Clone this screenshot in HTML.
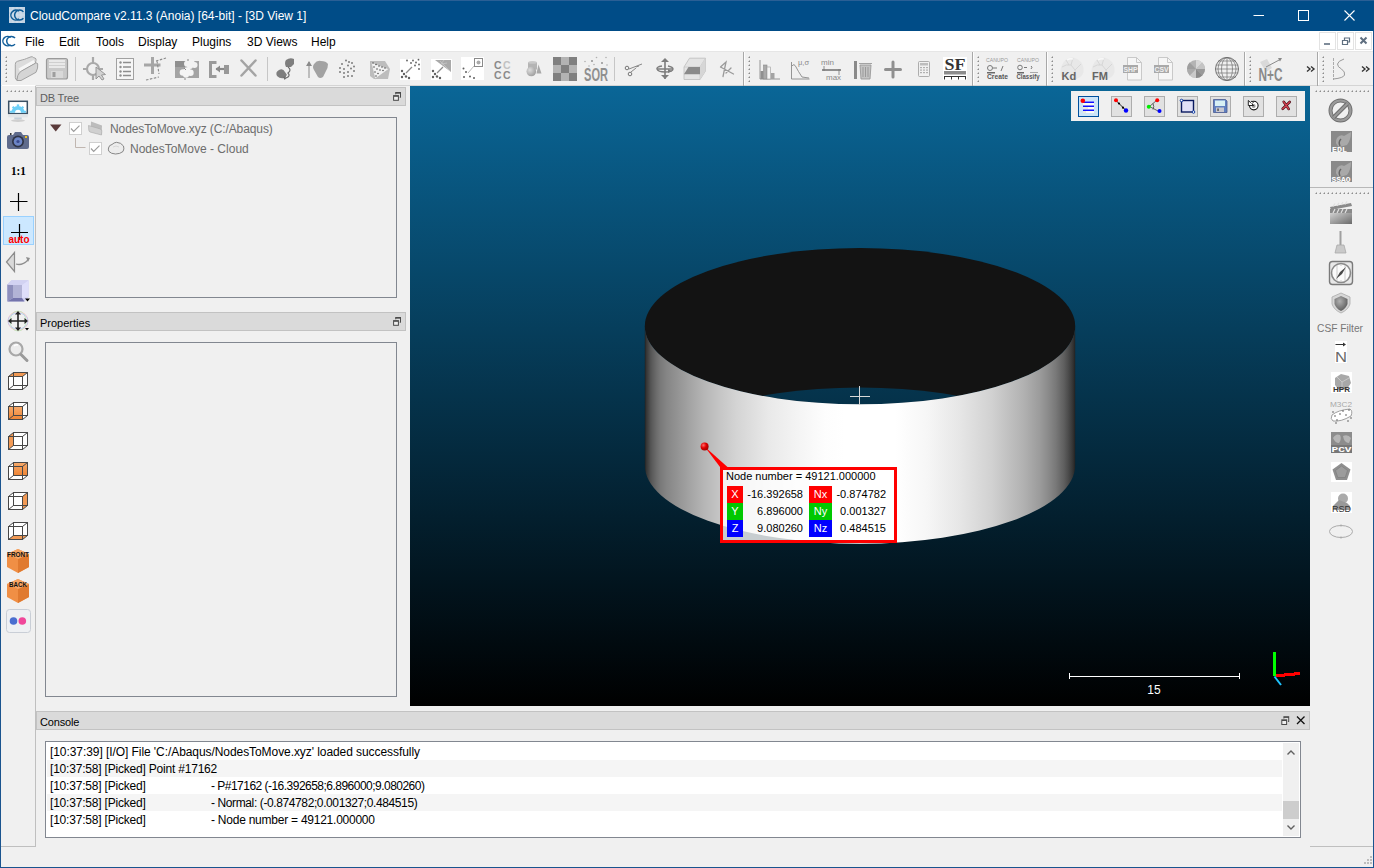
<!DOCTYPE html>
<html><head><meta charset="utf-8">
<style>
*{box-sizing:border-box;margin:0;padding:0}
html,body{width:1374px;height:868px;overflow:hidden;background:#f0f0f0;font-family:"Liberation Sans",sans-serif;font-size:12px;color:#000}
.a{position:absolute}
.t{position:absolute;white-space:nowrap;line-height:14px}
svg{position:absolute;overflow:visible}
</style></head><body>
<!-- window frame -->
<div class="a" style="left:0;top:0;width:1374px;height:868px;border:1px solid #1a548f;border-top:none"></div>
<!-- title bar -->
<div class="a" style="left:0;top:0;width:1374px;height:31px;background:#004c87"></div>
<div class="a" style="left:0;top:0;width:1374px;height:1px;background:#2a5f95"></div>
<div id="titlebar-icons"></div>
<div class="t" style="left:30px;top:9px;color:#fff;font-size:12px">CloudCompare v2.11.3 (Anoia) [64-bit] - [3D View 1]</div>

<!-- menu bar -->
<div class="a" style="left:1px;top:31px;width:1372px;height:21px;background:#fff"></div>
<div class="a" style="left:1px;top:51px;width:1372px;height:1px;background:#e6e6e6"></div>
<div id="menu">
<div class="t" style="left:25px;top:35px">File</div>
<div class="t" style="left:59px;top:35px">Edit</div>
<div class="t" style="left:96px;top:35px">Tools</div>
<div class="t" style="left:138px;top:35px">Display</div>
<div class="t" style="left:192px;top:35px">Plugins</div>
<div class="t" style="left:247px;top:35px">3D Views</div>
<div class="t" style="left:311px;top:35px">Help</div>
</div>

<!-- main toolbar -->
<div class="a" style="left:1px;top:52px;width:1372px;height:34px;background:#f0f0f0"></div>
<div class="a" style="left:1px;top:85px;width:1372px;height:1px;background:#d4d4d4"></div>

<!-- left toolbar -->
<div class="a" style="left:1px;top:86px;width:34px;height:761px;background:#f0f0f0"></div>
<div class="a" style="left:35px;top:86px;width:1px;height:761px;background:#bfbfbf"></div>
<div class="a" style="left:1px;top:846px;width:35px;height:1px;background:#bfbfbf"></div>

<!-- DB tree dock -->
<div class="a" style="left:36px;top:87px;width:370px;height:19px;background:#dadada;border:1px solid #c2c2c2"></div>
<div class="t" style="left:40px;top:91px;color:#5e5e5e;font-size:11px;letter-spacing:-0.2px">DB Tree</div>
<div class="a" style="left:45px;top:117px;width:352px;height:181px;border:1px solid #828790;background:#f0f0f0"></div>

<!-- properties dock -->
<div class="a" style="left:36px;top:312px;width:370px;height:19px;background:#dadada;border:1px solid #c2c2c2"></div>
<div class="t" style="left:40px;top:316px;font-size:11px;letter-spacing:0px">Properties</div>
<div class="a" style="left:45px;top:342px;width:352px;height:355px;border:1px solid #828790;background:#f0f0f0"></div>

<!-- 3D view -->
<div class="a" style="left:410px;top:86px;width:900px;height:620px;background:linear-gradient(#0a6697,#000)"></div>
<svg style="left:410px;top:86px" width="900" height="620" viewBox="410 86 900 620">
<defs>
<linearGradient id="bg" gradientUnits="userSpaceOnUse" x1="0" y1="86" x2="0" y2="706"><stop offset="0" stop-color="#0a6697"/><stop offset="1" stop-color="#000"/></linearGradient>
<linearGradient id="wall" gradientUnits="userSpaceOnUse" x1="644.6" y1="0" x2="1075.4" y2="0">
<stop offset="0.0000" stop-color="#1e1e1e"/>
<stop offset="0.0021" stop-color="#2a2a2a"/>
<stop offset="0.0044" stop-color="#363636"/>
<stop offset="0.0091" stop-color="#444444"/>
<stop offset="0.0137" stop-color="#525252"/>
<stop offset="0.0183" stop-color="#5c5c5c"/>
<stop offset="0.0276" stop-color="#6c6c6c"/>
<stop offset="0.0369" stop-color="#797979"/>
<stop offset="0.0508" stop-color="#858585"/>
<stop offset="0.0648" stop-color="#8d8d8d"/>
<stop offset="0.1019" stop-color="#a2a2a2"/>
<stop offset="0.1390" stop-color="#b6b6b6"/>
<stop offset="0.1762" stop-color="#c6c6c6"/>
<stop offset="0.2133" stop-color="#d4d4d4"/>
<stop offset="0.2876" stop-color="#e9e9e9"/>
<stop offset="0.3619" stop-color="#f5f5f5"/>
<stop offset="0.4188" stop-color="#fdfdfd"/>
<stop offset="0.4652" stop-color="#ffffff"/>
<stop offset="0.5812" stop-color="#ffffff"/>
<stop offset="0.6578" stop-color="#f6f6f6"/>
<stop offset="0.7321" stop-color="#e6e6e6"/>
<stop offset="0.8064" stop-color="#d1d1d1"/>
<stop offset="0.8435" stop-color="#c1c1c1"/>
<stop offset="0.8807" stop-color="#b1b1b1"/>
<stop offset="0.9178" stop-color="#9b9b9b"/>
<stop offset="0.9364" stop-color="#8b8b8b"/>
<stop offset="0.9550" stop-color="#787878"/>
<stop offset="0.9643" stop-color="#6b6b6b"/>
<stop offset="0.9735" stop-color="#5f5f5f"/>
<stop offset="0.9828" stop-color="#4d4d4d"/>
<stop offset="0.9921" stop-color="#393939"/>
<stop offset="0.9968" stop-color="#2c2c2c"/>
<stop offset="1.0000" stop-color="#1e1e1e"/>
</linearGradient>
<radialGradient id="dot" cx="0.35" cy="0.35" r="0.7"><stop offset="0" stop-color="#ff6a6a"/><stop offset="0.5" stop-color="#e00000"/><stop offset="1" stop-color="#a00000"/></radialGradient>
<clipPath id="topc"><ellipse cx="860" cy="326.2" rx="215.2" ry="78.2"/></clipPath>
</defs>
<ellipse cx="860" cy="326.2" rx="215.2" ry="78.2" fill="#131313"/>
<ellipse cx="860" cy="465.6" rx="215.2" ry="78.2" fill="url(#bg)" clip-path="url(#topc)"/>
<path d="M644.8 326.2 L644.8 465.6 A215.2 78.2 0 0 0 1075.2 465.6 L1075.2 326.2 A215.2 78.2 0 0 1 644.8 326.2 Z" fill="url(#wall)"/>
<path d="M859.5 386v19M850 396.5h20" stroke="#d8d8d8" stroke-width="1"/>
<!-- leader -->
<path d="M704.5 446.5 L720 467 L727.5 467 Z" fill="#ff0000"/>
<circle cx="704.6" cy="446.4" r="4" fill="url(#dot)"/>
<!-- scale bar -->
<path d="M1069 676.5H1240M1069.5 673v6M1239.5 673v6" stroke="#fff" stroke-width="1"/>
<!-- axes -->
<rect x="1273" y="652" width="3" height="24" fill="#00ff00"/>
<g fill="#ff0000"><rect x="1276" y="674" width="9" height="3"/><rect x="1284" y="673" width="11" height="3"/><rect x="1294" y="672" width="6" height="3"/></g>
<path d="M1274.5 676.5L1281 685" stroke="#1ec4ff" stroke-width="2"/>
</svg>
<div class="a" style="left:720px;top:467px;width:177px;height:76px;border:3px solid #ff0000;background:rgba(255,255,255,0.78)"></div>
<div class="t" style="left:726px;top:470px;font-size:11px;line-height:13px">Node number = 49121.000000</div>
<div class="a" style="left:727px;top:486px;width:16px;height:17px;background:#ff0000"></div>
<div class="a" style="left:727px;top:503px;width:16px;height:17px;background:#00c800"></div>
<div class="a" style="left:727px;top:520px;width:16px;height:17px;background:#0000ff"></div>
<div class="a" style="left:809px;top:486px;width:23px;height:17px;background:#ff0000"></div>
<div class="a" style="left:809px;top:503px;width:23px;height:17px;background:#00c800"></div>
<div class="a" style="left:809px;top:520px;width:23px;height:17px;background:#0000ff"></div>
<div class="t" style="left:727px;top:488px;width:16px;text-align:center;color:#fff;font-size:11px;line-height:13px">X</div>
<div class="t" style="left:727px;top:505px;width:16px;text-align:center;color:#fff;font-size:11px;line-height:13px">Y</div>
<div class="t" style="left:727px;top:522px;width:16px;text-align:center;color:#fff;font-size:11px;line-height:13px">Z</div>
<div class="t" style="left:809px;top:488px;width:23px;text-align:center;color:#fff;font-size:11px;line-height:13px">Nx</div>
<div class="t" style="left:809px;top:505px;width:23px;text-align:center;color:#fff;font-size:11px;line-height:13px">Ny</div>
<div class="t" style="left:809px;top:522px;width:23px;text-align:center;color:#fff;font-size:11px;line-height:13px">Nz</div>
<div class="t" style="left:743px;top:488px;width:60px;text-align:right;font-size:11px;line-height:13px">-16.392658</div>
<div class="t" style="left:743px;top:505px;width:60px;text-align:right;font-size:11px;line-height:13px">6.896000</div>
<div class="t" style="left:743px;top:522px;width:60px;text-align:right;font-size:11px;line-height:13px">9.080260</div>
<div class="t" style="left:832px;top:488px;width:54px;text-align:right;font-size:11px;line-height:13px">-0.874782</div>
<div class="t" style="left:832px;top:505px;width:54px;text-align:right;font-size:11px;line-height:13px">0.001327</div>
<div class="t" style="left:832px;top:522px;width:54px;text-align:right;font-size:11px;line-height:13px">0.484515</div>
<div class="t" style="left:1134px;top:683px;width:40px;text-align:center;color:#fff;font-size:12px">15</div>

<!-- 3D overlay toolbar -->
<div class="a" style="left:1071px;top:91px;width:234px;height:30px;background:#f0f0f0"></div>
<div class="a" style="left:1078px;top:96px;width:21px;height:21px;background:#cce4f7;border:1px solid #00509e"></div>
<div class="a" style="left:1111px;top:96px;width:21px;height:21px;background:#e1e1e1;border:1px solid #adadad"></div>
<div class="a" style="left:1144px;top:96px;width:21px;height:21px;background:#e1e1e1;border:1px solid #adadad"></div>
<div class="a" style="left:1177px;top:96px;width:21px;height:21px;background:#e1e1e1;border:1px solid #adadad"></div>
<div class="a" style="left:1210px;top:96px;width:21px;height:21px;background:#e1e1e1;border:1px solid #adadad"></div>
<div class="a" style="left:1243px;top:96px;width:21px;height:21px;background:#e1e1e1;border:1px solid #adadad"></div>
<div class="a" style="left:1276px;top:96px;width:21px;height:21px;background:#e1e1e1;border:1px solid #adadad"></div>
<svg style="left:0;top:0" width="1374" height="868" viewBox="0 0 1374 868">
<rect x="1083" y="101.5" width="11" height="11.5" fill="#fbfbf6"/>
<path d="M1083 102.3h11M1083 106.3h11M1083 110.2h11" stroke="#1010ff" stroke-width="1.5"/>
<path d="M1083 108h5M1083 112h3" stroke="#d8d8c8" stroke-width="1"/>
<circle cx="1082.8" cy="100.8" r="2.3" fill="#ff0000"/>
<path d="M1116 100.5L1126 110.5" stroke="#222" stroke-width="1"/>
<circle cx="1119" cy="103.5" r="1.1" fill="#000"/><circle cx="1123" cy="107.7" r="1.1" fill="#000"/>
<circle cx="1116" cy="100.3" r="2" fill="#ff0000"/><circle cx="1126" cy="110.5" r="2.2" fill="#0000ff"/>
<path d="M1149.5 106.5L1157 100M1149.5 106.5L1158 111M1153 103.5q1.5 3 0 6" stroke="#555" stroke-width="0.9" fill="none"/>
<circle cx="1157.2" cy="100.3" r="2" fill="#ff0000"/><circle cx="1159.5" cy="111" r="2" fill="#0000ff"/><circle cx="1148.8" cy="106.8" r="2" fill="#00ee00"/>
<rect x="1181.5" y="100.5" width="12" height="11.5" fill="#e0e0f8" stroke="#0a1a60" stroke-width="1.4"/>
<circle cx="1181.5" cy="100.5" r="1.3" fill="#fff" stroke="#0030a0" stroke-width="0.9"/><circle cx="1193.5" cy="112" r="1.3" fill="#fff" stroke="#0030a0" stroke-width="0.9"/>
<path d="M1213.5 99.5h12l1.5 1.5v11.5h-13.5z" fill="#6080c0" stroke="#4a5a90" stroke-width="0.8"/>
<rect x="1215" y="100.5" width="10" height="5.5" fill="#d8f0f4"/>
<rect x="1216" y="107.5" width="8" height="4.5" fill="#c8c8d0"/><rect x="1217.3" y="108.5" width="1.5" height="2.5" fill="#555"/>
<circle cx="1253.8" cy="105.6" r="4.3" fill="#fff" stroke="#111" stroke-width="1.1"/><circle cx="1253.6" cy="106" r="2" fill="#9a9a9a"/><path d="M1248.3 100.5v5h5.3l-1.8-1.7 1.5-1.5-1.4-1.2-1.5 1.4z" fill="#fff" stroke="#111" stroke-width="0.9"/>
<path d="M1283.7 101.8l5 7.2M1289.7 102l-7 6.8" stroke="#4a1018" stroke-width="2.6" stroke-linecap="round"/><path d="M1283.7 101.8l5 7.2M1289.7 102l-7 6.8" stroke="#d04050" stroke-width="1.4" stroke-linecap="round"/>
</svg>

<!-- right toolbar -->
<div class="a" style="left:1310px;top:86px;width:63px;height:761px;background:#f0f0f0"></div>
<div class="a" style="left:1310px;top:846px;width:63px;height:1px;background:#bfbfbf"></div>

<!-- console dock -->
<div class="a" style="left:36px;top:711px;width:1274px;height:19px;background:#dadada;border:1px solid #c2c2c2"></div>
<div class="t" style="left:40px;top:715px;font-size:11px;letter-spacing:-0.15px">Console</div>
<div class="a" style="left:45px;top:741px;width:1256px;height:97px;border:1px solid #828790;background:#fff"></div>

<!-- toolbar handles -->
<svg style="left:0;top:0" width="1374" height="868" viewBox="0 0 1374 868">
<g fill="#8c8c8c"><path d="M5 58h2v-2z"/><path d="M748 58h2v-2z"/><path d="M977 58h2v-2z"/><path d="M1051 58h2v-2z"/><path d="M1249 58h2v-2z"/><path d="M1322 58h2v-2z"/><path d="M5 62h2v-2z"/><path d="M748 62h2v-2z"/><path d="M977 62h2v-2z"/><path d="M1051 62h2v-2z"/><path d="M1249 62h2v-2z"/><path d="M1322 62h2v-2z"/><path d="M5 66h2v-2z"/><path d="M748 66h2v-2z"/><path d="M977 66h2v-2z"/><path d="M1051 66h2v-2z"/><path d="M1249 66h2v-2z"/><path d="M1322 66h2v-2z"/><path d="M5 70h2v-2z"/><path d="M748 70h2v-2z"/><path d="M977 70h2v-2z"/><path d="M1051 70h2v-2z"/><path d="M1249 70h2v-2z"/><path d="M1322 70h2v-2z"/><path d="M5 74h2v-2z"/><path d="M748 74h2v-2z"/><path d="M977 74h2v-2z"/><path d="M1051 74h2v-2z"/><path d="M1249 74h2v-2z"/><path d="M1322 74h2v-2z"/><path d="M5 78h2v-2z"/><path d="M748 78h2v-2z"/><path d="M977 78h2v-2z"/><path d="M1051 78h2v-2z"/><path d="M1249 78h2v-2z"/><path d="M1322 78h2v-2z"/><path d="M5 82h2v-2z"/><path d="M748 82h2v-2z"/><path d="M977 82h2v-2z"/><path d="M1051 82h2v-2z"/><path d="M1249 82h2v-2z"/><path d="M1322 82h2v-2z"/><path d="M6 92h2v-2z"/><path d="M10 92h2v-2z"/><path d="M14 92h2v-2z"/><path d="M18 92h2v-2z"/><path d="M22 92h2v-2z"/><path d="M26 92h2v-2z"/><path d="M30 92h2v-2z"/><path d="M1315 92h2v-2z"/><path d="M1315 194h2v-2z"/><path d="M1319 92h2v-2z"/><path d="M1319 194h2v-2z"/><path d="M1323 92h2v-2z"/><path d="M1323 194h2v-2z"/><path d="M1327 92h2v-2z"/><path d="M1327 194h2v-2z"/><path d="M1331 92h2v-2z"/><path d="M1331 194h2v-2z"/><path d="M1335 92h2v-2z"/><path d="M1335 194h2v-2z"/><path d="M1339 92h2v-2z"/><path d="M1339 194h2v-2z"/><path d="M1343 92h2v-2z"/><path d="M1343 194h2v-2z"/><path d="M1347 92h2v-2z"/><path d="M1347 194h2v-2z"/><path d="M1351 92h2v-2z"/><path d="M1351 194h2v-2z"/><path d="M1355 92h2v-2z"/><path d="M1355 194h2v-2z"/><path d="M1359 92h2v-2z"/><path d="M1359 194h2v-2z"/><path d="M1363 92h2v-2z"/><path d="M1363 194h2v-2z"/><path d="M1367 92h2v-2z"/><path d="M1367 194h2v-2z"/></g>
<g stroke="#c6c6c6" stroke-width="1"><path d="M75.5 57v24M267.5 57v24M614.5 57v24"/></g>
<g stroke="#a8a8a8" stroke-width="1"><path d="M743.5 52v34M972.5 52v34M1046.5 52v34M1244.5 52v34M1317.5 52v34"/></g><g stroke="#fdfdfd" stroke-width="1"><path d="M744.5 52v33M973.5 52v33M1047.5 52v33M1245.5 52v33M1318.5 52v33"/></g>
<path d="M1310 187.5h63" stroke="#b8b8b8"/>
<path d="M1.5 85.5h34" stroke="#fff"/>
</svg>
<!-- main toolbar icons -->
<svg style="left:0;top:0" width="1374" height="868" viewBox="0 0 1374 868">
<!-- folder -->
<path d="M15.3 64.5Q15 62 17.5 61.3L22.5 59.8Q24.5 59.5 26.5 58.5L31 56.8Q33 56.3 33.6 57.8L35 58Q36.5 58.5 36 60.5L35.3 63L21.5 71L17.3 79.5Q15.3 80 15.3 77.5Z" fill="#dcdcdc" stroke="#9c9c9c" stroke-width="0.9"/>
<path d="M18.5 68.5L33.5 60L35 63L20 71.5z" fill="#f6f6f6"/>
<path d="M16.8 80.5L21 80.5L36 72.3Q38.3 68 37.7 64Q37.2 62.3 35.5 63.2L21.5 71Q19 72.5 17.8 75.5z" fill="#d5d5d5" stroke="#9a9a9a" stroke-width="0.9"/>
<!-- save -->
<rect x="46.5" y="58.5" width="21" height="20.5" rx="2" fill="#c9c9c9" stroke="#9a9a9a" stroke-width="1.2"/>
<rect x="49" y="60" width="16" height="8" fill="#e9e9e9"/>
<path d="M49 62.5h16M49 65.5h16" stroke="#cfcfcf" stroke-width="1"/>
<rect x="51" y="71" width="12" height="7" fill="#d9d9d9"/>
<rect x="52.5" y="72" width="3" height="5" fill="#9e9e9e"/>
<!-- pick -->
<circle cx="93" cy="69" r="6" fill="none" stroke="#a9a9a9" stroke-width="2.2"/>
<path d="M93 57v6M93 75v5M83 69h5M98 69h5" stroke="#a9a9a9" stroke-width="2.2"/>
<path d="M96 67l0 12 3-3 3 4 2-1-2.5-4 4-0.5z" fill="#d2d2d2" stroke="#8e8e8e" stroke-width="0.9"/>
<!-- list -->
<rect x="116.5" y="58.5" width="17" height="21" fill="#f6f6f6" stroke="#a1a1a1" stroke-width="1"/>
<g fill="#8e8e8e"><circle cx="120.5" cy="62.5" r="1.2"/><circle cx="120.5" cy="67" r="1.2"/><circle cx="120.5" cy="71.5" r="1.2"/><circle cx="120.5" cy="75.5" r="1.2"/></g>
<path d="M123 62.5h8M123 67h8M123 71.5h8M123 75.5h8" stroke="#8e8e8e" stroke-width="1.3"/>
<!-- plus dashed -->
<path d="M152.5 57v17M144 65h16.5" stroke="#a6a6a6" stroke-width="3"/>
<path d="M156 61l10-3M157 61l2 13M146 80l13-3" stroke="#8a8a8a" stroke-width="1.1" stroke-dasharray="2.5 1.5"/>
<!-- cloud segment -->
<rect x="175" y="61" width="24" height="17" fill="#a4a4a4"/><rect x="175" y="61" width="10" height="6" fill="#8f8f8f"/>
<g fill="#f2f2f2"><circle cx="187" cy="63.8" r="3"/><circle cx="191" cy="62.5" r="3.5"/><circle cx="194.5" cy="65" r="3"/><circle cx="190" cy="66" r="3"/></g>
<g fill="#f5f5f5"><circle cx="183" cy="72.5" r="3.3"/><circle cx="187" cy="70.8" r="3.5"/><circle cx="190.5" cy="72.8" r="3.2"/><circle cx="186" cy="74.8" r="3"/></g>
<path d="M184 68l2 2M185 78v2M188 59v2" stroke="#888" stroke-width="1"/>
<!-- [<- -->
<path d="M209 61h7.5v3h-4.5v11h4.5v3h-7.5z" fill="#9a9a9a"/>
<path d="M216 69h8" stroke="#8a8a8a" stroke-width="2.2"/><path d="M215.5 69l4.5-3.5v7z" fill="#8a8a8a"/>
<rect x="224" y="65" width="5" height="9" fill="#989898"/>
<!-- X -->
<path d="M241.5 60.5l14 15M255.5 60.5l-14 15" stroke="#a4a4a4" stroke-width="2.5" stroke-linecap="round"/>
<!-- registration -->
<path d="M277 76q-2-4 2-6t6 2l2 3-3 3q-4 1-7-2z" fill="#7e7e7e"/>
<path d="M286 60q4-3 8-1v5l-3 3-5 0q-2-4 0-7z" fill="#7e7e7e"/>
<path d="M288 67q4 3 0 6q3 3-2 5l-2 1" fill="none" stroke="#6e6e6e" stroke-width="1.2"/><path d="M283 77l2 3 1-4z" fill="#6e6e6e"/>
<!-- normals -->
<path d="M309 78V62" stroke="#8a8a8a" stroke-width="1"/><path d="M306 66l3-5 3 5z" fill="#8a8a8a"/>
<path d="M314 64q3-4 7-3q5 0 7 3q0 4-2 7l-3 6q-3 2-5 0l-4-7q-2-3 0-6z" fill="#a2a2a2"/>
<!-- dots -->
<g fill="#7d7d7d"><circle cx="346" cy="60.6" r="1"/><circle cx="349" cy="62" r="1"/><circle cx="352" cy="63" r="1"/><circle cx="342" cy="64" r="1"/><circle cx="348" cy="65.5" r="1"/><circle cx="354" cy="66.5" r="1"/><circle cx="340" cy="68" r="1"/><circle cx="344" cy="69" r="1"/><circle cx="351" cy="68.5" r="1"/><circle cx="354" cy="71" r="1"/><circle cx="340" cy="72" r="1"/><circle cx="344" cy="73" r="1"/><circle cx="348" cy="72" r="1"/><circle cx="344" cy="77" r="1"/><circle cx="348" cy="76" r="1"/><circle cx="352" cy="76" r="1"/></g>
<!-- mesh tri -->
<path d="M370 61h15l5 8-2 10h-14l-4-3z" fill="#bdbdbd"/>
<path d="M371 62l18 7-14 10z" fill="#f2f2f2" stroke="#b2b2b2" stroke-width="0.6"/>
<g fill="#555"><circle cx="373" cy="63" r="0.8"/><circle cx="376" cy="64.5" r="0.8"/><circle cx="379" cy="66" r="0.8"/><circle cx="382" cy="67" r="0.8"/><circle cx="385" cy="68" r="0.8"/><circle cx="374" cy="67" r="0.8"/><circle cx="377" cy="69" r="0.8"/><circle cx="380" cy="70" r="0.8"/><circle cx="383" cy="70.5" r="0.8"/><circle cx="375" cy="72" r="0.8"/><circle cx="378" cy="73.5" r="0.8"/><circle cx="376" cy="76" r="0.8"/></g>
<!-- C2C -->
<rect x="400" y="59" width="21" height="21" fill="#fff"/>
<g fill="#606060"><circle cx="407" cy="60.5" r="0.9"/><circle cx="413" cy="60.5" r="0.9"/><circle cx="418.5" cy="59.7" r="0.9"/><circle cx="411" cy="63" r="0.9"/><circle cx="416" cy="62.5" r="0.9"/><circle cx="419" cy="64.5" r="0.9"/><circle cx="415" cy="65.5" r="0.9"/><circle cx="419" cy="69" r="0.9"/><circle cx="402" cy="71" r="1.2"/><circle cx="404" cy="74" r="1.2"/><circle cx="402" cy="77" r="1.2"/><circle cx="406" cy="76.5" r="1.2"/><circle cx="409" cy="78" r="1.2"/></g>
<path d="M406 73l6-6" stroke="#8a8a8a" stroke-width="1.2"/>
<!-- C2M -->
<rect x="431" y="59" width="21" height="21" fill="#fff"/>
<path d="M435 60h16v12z" fill="#a9a9a9"/><path d="M440 61l10 10M444 60l-3 4M447 63l-5 1" stroke="#d0d0d0" stroke-width="0.6"/>
<g fill="#606060"><circle cx="433" cy="71" r="1.2"/><circle cx="435" cy="74" r="1.2"/><circle cx="433" cy="77" r="1.2"/><circle cx="437" cy="76.5" r="1.2"/><circle cx="440" cy="78" r="1.2"/></g>
<path d="M437 73l6-6" stroke="#8a8a8a" stroke-width="1.2"/>
<!-- cloud primitive -->
<rect x="461" y="57" width="23" height="23" fill="#fff"/>
<rect x="474.5" y="58.5" width="8" height="8" fill="#fff" stroke="#8a8a8a" stroke-width="1"/><circle cx="478.5" cy="62.5" r="2" fill="#aaa"/>
<path d="M468 73l6-7" stroke="#aaa" stroke-width="0.8"/>
<g fill="#606060"><circle cx="463.5" cy="68.5" r="1"/><circle cx="466" cy="72" r="1"/><circle cx="464" cy="77" r="1"/><circle cx="470" cy="76.5" r="1"/><circle cx="474" cy="78" r="1"/></g>
<!-- CCCC -->
<g font-family="Liberation Sans" font-weight="bold" font-size="10.5">
<text x="494" y="69" fill="#8a8a8a">C</text><text x="503" y="69" fill="#c2c2c2">C</text>
<text x="494" y="78.5" fill="#8a8a8a">C</text><text x="503" y="78.5" fill="#8a8a8a">C</text></g>
<!-- solids -->
<defs><radialGradient id="sg" cx="0.35" cy="0.35" r="0.75"><stop offset="0" stop-color="#dcdcdc"/><stop offset="1" stop-color="#999"/></radialGradient></defs><path d="M528 62.5q4.5-2 9 0v7h-9z" fill="#b4b4b4"/><ellipse cx="532.5" cy="62.5" rx="4.5" ry="1.3" fill="#c8c8c8"/><path d="M536.5 73.5l2-9 3 9z" fill="#a8a8a8"/><circle cx="531.3" cy="71.5" r="4.8" fill="url(#sg)"/>
<!-- checker -->
<g><rect x="553" y="57" width="24" height="24" fill="#b3b3b3"/>
<path d="M553 57h8v8h-8zM569 57h8v8h-8zM561 65h8v8h-8zM553 73h8v8h-8zM569 73h8v8h-8z" fill="#7f7f7f"/></g>
<!-- SOR -->
<text x="584" y="80.5" font-family="Liberation Sans" font-weight="bold" font-size="18.5" fill="#8f8f8f" textLength="24" lengthAdjust="spacingAndGlyphs">SOR</text>
<g fill="#b0b0b0"><circle cx="585" cy="61.5" r="0.8"/><circle cx="596.5" cy="57.5" r="0.8"/><circle cx="606" cy="57.5" r="0.8"/><circle cx="594" cy="64.5" r="0.8"/><circle cx="607" cy="65" r="0.8"/><circle cx="589" cy="66" r="0.8"/></g>
<path d="M591 60l2 2M593 60l-2 2M601 62l2 2M603 62l-2 2" stroke="#999" stroke-width="0.8"/>
<!-- scissors -->
<circle cx="627" cy="68" r="1.8" fill="none" stroke="#777" stroke-width="1"/><circle cx="630" cy="74" r="1.8" fill="none" stroke="#777" stroke-width="1"/>
<path d="M629 69l13-5M631 72l5-4M636 67l3-1" stroke="#888" stroke-width="1"/>
<!-- rotate translate -->
<path d="M665 59v20M657 69h16" stroke="#7d7d7d" stroke-width="1.6"/>
<path d="M661 62l4-4 4 4zM661 75l4 4 4-4z" fill="#7d7d7d"/>
<path d="M662 66q-6 1-5 3q1 3 8 3q8 0 8-3q0-2-5-3" fill="none" stroke="#7d7d7d" stroke-width="1.4"/>
<path d="M668 69l4 2-4 2z" fill="#7d7d7d"/>
<!-- section box -->
<path d="M684 67L689.5 58.2H705.5V71L700 79.5H684Z" fill="#e4e4e4" stroke="#bdbdbd" stroke-width="0.8"/>
<path d="M684 67H700L705.5 58.2M700 67V79.5" fill="none" stroke="#c6c6c6" stroke-width="0.8"/>
<path d="M700 67L705.5 58.2V71L700 79.5z" fill="#d6d6d6"/>
<path d="M684 74.3L688.5 67.1H700V74.3Z" fill="#8a8a8a"/>
<!-- polyline -->
<path d="M720.5 67L726 62L723 76.5M720.5 67L733.5 74M731 68L726 73" fill="none" stroke="#9a9a9a" stroke-width="1.3" stroke-linecap="round"/>
<!-- histogram -->
<path d="M760 60v19h20" fill="none" stroke="#8a8a8a" stroke-width="0.9"/>
<rect x="760.5" y="71" width="3" height="8" fill="#8f8f8f"/><rect x="763.5" y="65" width="3.5" height="14" fill="#a9a9a9" stroke="#8a8a8a" stroke-width="0.6"/><rect x="767" y="67" width="3.5" height="12" fill="#f4f4f4" stroke="#9a9a9a" stroke-width="0.6"/><rect x="771" y="73" width="3.5" height="6" fill="#a3a3a3"/>
<!-- mu sigma -->
<path d="M791.5 62v17h18" fill="none" stroke="#8a8a8a" stroke-width="0.9"/>
<path d="M792 66q2-3 4 1t6 10l7 1" fill="none" stroke="#8a8a8a" stroke-width="0.9"/>
<text x="798" y="65" font-family="Liberation Sans" font-size="7.5" fill="#8a8a8a">μ,σ</text>
<!-- min max -->
<text x="821" y="65" font-family="Liberation Sans" font-size="8" fill="#8a8a8a">min</text>
<text x="826" y="80" font-family="Liberation Sans" font-size="8" fill="#8a8a8a">max</text>
<path d="M822 70h19" stroke="#8f8f8f" stroke-width="2"/><path d="M824 66v5M839 69v6" stroke="#777" stroke-width="0.8"/>
<!-- trash -->
<rect x="854" y="61" width="3" height="18" fill="#8a8a8a"/>
<path d="M859 63.5h13M860 65h11l-1 14h-9z" fill="#c3c3c3" stroke="#999" stroke-width="0.9"/>
<path d="M863 67v10M865.5 67v10M868 67v10" stroke="#999" stroke-width="1"/>
<!-- plus -->
<path d="M893 62v15M885.5 69.5h15" stroke="#8f8f8f" stroke-width="3" stroke-linecap="round"/>
<!-- calculator -->
<rect x="918.5" y="61.5" width="11" height="15" rx="1" fill="#f0f0f0" stroke="#a5a5a5" stroke-width="0.9"/>
<rect x="920" y="63" width="8" height="2.5" fill="#bdbdbd"/>
<g fill="#b0b0b0"><rect x="920" y="67" width="2" height="1.2"/><rect x="923" y="67" width="2" height="1.2"/><rect x="926" y="67" width="2" height="1.2"/><rect x="920" y="69.5" width="2" height="1.2"/><rect x="923" y="69.5" width="2" height="1.2"/><rect x="926" y="69.5" width="2" height="1.2"/><rect x="920" y="72" width="2" height="1.2"/><rect x="923" y="72" width="2" height="1.2"/><rect x="926" y="72" width="2" height="1.2"/></g>
<!-- SF -->
<rect x="943" y="57" width="24" height="23" fill="#fff"/>
<text x="944.5" y="69.5" font-family="Liberation Serif" font-weight="bold" font-size="16.5" fill="#333" textLength="21" lengthAdjust="spacingAndGlyphs">SF</text>
<rect x="944" y="71" width="22" height="3.5" fill="#8c8c8c"/>
<path d="M944 76.5h22M944.5 76.5v3M951.5 76.5v3M958.5 76.5v3M965.5 76.5v3" stroke="#333" stroke-width="1"/>
<!-- CANUPO -->
<g font-family="Liberation Sans" fill="#9a9a9a">
<text x="986" y="62" font-size="5.5" textLength="22" lengthAdjust="spacingAndGlyphs">CANUPO</text>
<text x="1017" y="62" font-size="5.5" textLength="22" lengthAdjust="spacingAndGlyphs">CANUPO</text></g>
<g font-family="Liberation Sans" fill="#555" font-size="8" font-weight="bold">
<text x="987" y="79" textLength="21" lengthAdjust="spacingAndGlyphs">Create</text>
<text x="1016.5" y="79" textLength="23" lengthAdjust="spacingAndGlyphs">Classify</text></g>
<g fill="none" stroke="#7a7a7a" stroke-width="1"><circle cx="990" cy="68" r="2.5"/><path d="M993 68h4M1003 66l-2 5"/><circle cx="1020" cy="67.5" r="2.3"/><path d="M1024 67.5h3M1031 66q2 1 0 3"/></g>
<g fill="#6a6a6a"><rect x="987" y="72" width="8" height="1.5"/><rect x="1017" y="72" width="7" height="1.5"/><rect x="1030" y="72" width="8" height="1" fill="#aaa"/></g>
<!-- Kd / FM -->
<g transform="translate(0 0)"><path d="M1060.5 71Q1061 64 1066 59.5Q1070 57 1073.5 57.5Q1078 58.5 1081 62Q1084 66 1083.5 72Q1082 77.5 1076 79L1063 79Q1060 76 1060.5 71z" fill="#e8e8e8"/><path d="M1062 67q4-3 9-2l4 5M1071 65l2-7M1075 70l6-6M1075 70l1 9M1066 60l3 5" fill="none" stroke="#d2d2d2" stroke-width="0.8"/><path d="M1067 60q3-2 6-1" stroke="#f8f8f8" stroke-width="1.5" fill="none"/></g><text x="1061.5" y="80" font-family="Liberation Sans" font-weight="bold" font-size="11" fill="#666">Kd</text>
<g transform="translate(31 0)"><path d="M1060.5 71Q1061 64 1066 59.5Q1070 57 1073.5 57.5Q1078 58.5 1081 62Q1084 66 1083.5 72Q1082 77.5 1076 79L1063 79Q1060 76 1060.5 71z" fill="#e8e8e8"/><path d="M1062 67q4-3 9-2l4 5M1071 65l2-7M1075 70l6-6M1075 70l1 9M1066 60l3 5" fill="none" stroke="#d2d2d2" stroke-width="0.8"/><path d="M1067 60q3-2 6-1" stroke="#f8f8f8" stroke-width="1.5" fill="none"/></g><text x="1092" y="80" font-family="Liberation Sans" font-weight="bold" font-size="11" fill="#666">FM</text>
<!-- SHP / CSV -->
<path d="M1127.5 57.5h9l5 5v17.5h-14z" fill="#f6f6f6" stroke="#c4c4c4" stroke-width="0.9"/><path d="M1136.5 57.5v5h5" fill="none" stroke="#c4c4c4" stroke-width="0.9"/>
<rect x="1123" y="65" width="15" height="8" fill="#a9a9a9"/>
<text x="1123.5" y="71.8" font-family="Liberation Sans" font-weight="bold" font-size="7" fill="#f0f0f0" textLength="14" lengthAdjust="spacingAndGlyphs">SHP</text>
<path d="M1158.5 57.5h9l5 5v17.5h-14z" fill="#f6f6f6" stroke="#c4c4c4" stroke-width="0.9"/><path d="M1167.5 57.5v5h5" fill="none" stroke="#c4c4c4" stroke-width="0.9"/>
<rect x="1154" y="65" width="15" height="8" fill="#a9a9a9"/>
<text x="1154.5" y="71.8" font-family="Liberation Sans" font-weight="bold" font-size="7" fill="#f0f0f0" textLength="14" lengthAdjust="spacingAndGlyphs">CSV</text>
<!-- pie -->
<circle cx="1196" cy="69" r="9" fill="#b4b4b4"/>
<path d="M1196 69V60a9 9 0 0 1 6.4 2.6z" fill="#d8d8d8"/><path d="M1196 69l6.4-6.4a9 9 0 0 1 2.6 6.4z" fill="#c4c4c4"/><path d="M1196 69h9a9 9 0 0 1-2.6 6.4z" fill="#999"/><path d="M1196 69l6.4 6.4a9 9 0 0 1-6.4 2.6z" fill="#8a8a8a"/><path d="M1196 69v9a9 9 0 0 1-6.4-2.6z" fill="#c9c9c9"/><path d="M1196 69l-6.4 6.4a9 9 0 0 1-2.6-6.4z" fill="#ababab"/><path d="M1196 69h-9a9 9 0 0 1 2.6-6.4z" fill="#9e9e9e"/>
<!-- globe -->
<g fill="none" stroke="#707070" stroke-width="0.7"><circle cx="1227" cy="69" r="11.5" stroke-width="1"/><ellipse cx="1227" cy="69" rx="5.5" ry="11.5"/><ellipse cx="1227" cy="69" rx="9" ry="11.5"/><path d="M1227 57.5v23M1216 65h22M1216 73h22M1218 61h18M1218 77h18M1215.5 69h23"/></g>
<!-- N+C -->
<path d="M1260 62l7-3 5 9-6 4z" fill="#d9d9d9"/><path d="M1266 67l15-8" stroke="#8a8a8a" stroke-width="1"/><path d="M1278 58l4 0-2 3.5z" fill="#8a8a8a"/>
<text x="1258.5" y="80.5" font-family="Liberation Sans" font-weight="bold" font-size="17.5" fill="#8a8a8a" textLength="24" lengthAdjust="spacingAndGlyphs">N+C</text>
<!-- chevrons -->
<path d="M1307 66.5l3 2.5-3 2.5M1311 66.5l3 2.5-3 2.5M1362 66.5l3 2.5-3 2.5M1366 66.5l3 2.5-3 2.5" fill="none" stroke="#333" stroke-width="1.4"/>
<!-- S curve -->
<path d="M1333.5 58v22" stroke="#999" stroke-width="0.8" stroke-dasharray="3 1"/>
<path d="M1344 59q-6 2-6.5 5q0 3 4 5q4 3 3 6q-1 3-11 4" fill="none" stroke="#9a9a9a" stroke-width="1"/>
</svg>
<!-- left toolbar icons -->
<svg style="left:0;top:0" width="1374" height="868" viewBox="0 0 1374 868">
<!-- monitor -->
<rect x="8.7" y="101.3" width="18.6" height="12.2" fill="#fff" stroke="#3a5064" stroke-width="1.5"/>
<path d="M11.2 112.7a6.8 6.8 0 0 1 13.6 0z" fill="#6ccff7"/>
<g fill="#6ccff7"><rect x="16.8" y="104.4" width="2.4" height="2"/><rect x="12.3" y="106.4" width="2.2" height="2.2" transform="rotate(-45 13.4 107.5)"/><rect x="21.5" y="106.4" width="2.2" height="2.2" transform="rotate(45 22.6 107.5)"/><rect x="10" y="110.8" width="2" height="1.9"/><rect x="24" y="110.8" width="2" height="1.9"/></g>
<path d="M15 112.7a3 3 0 0 1 6 0z" fill="#fff"/>
<rect x="8.2" y="114.2" width="19.6" height="3.2" fill="#e2e5e8"/>
<rect x="14.3" y="117.4" width="7.4" height="2" fill="#c4cfda"/>
<ellipse cx="18" cy="120.6" rx="7" ry="1.3" fill="#cfcfcf"/>
<!-- camera -->
<path d="M7 137q0-2 2-2h4l2-3h6l2 3h4q2 0 2 2v10q0 2-2 2h-18q-2 0-2-2z" fill="#5f6b8c"/>
<circle cx="18" cy="141.5" r="6" fill="#2f3446"/><circle cx="18" cy="141.5" r="4.3" fill="#6c85c6"/><circle cx="18" cy="141.5" r="1.6" fill="#3a4a90"/>
<rect x="25" y="136" width="2" height="2" fill="#f0c020"/><rect x="10" y="133" width="1.5" height="2" fill="#333"/>
<!-- 1:1 -->
<text x="11" y="175" font-family="Liberation Serif" font-weight="bold" font-size="13" fill="#000" textLength="15" lengthAdjust="spacingAndGlyphs">1:1</text>
<!-- crosshair -->
<path d="M18.5 193v18M10 201.5h17.5" stroke="#000" stroke-width="1.2"/>
<!-- auto button -->
<rect x="3.5" y="216.5" width="30" height="28" fill="#cce8ff" stroke="#99d1ff" stroke-width="1"/>
<path d="M19.5 224v16M11 232.5h17" stroke="#000" stroke-width="1.2"/>
<text x="8.5" y="242.5" font-family="Liberation Sans" font-weight="bold" font-size="10" fill="#ff0000" textLength="21" lengthAdjust="spacingAndGlyphs">auto</text>
<!-- arrow perspective -->
<path d="M6.5 262l8-9.5v19z" fill="#d9d9d9" stroke="#8c8c8c" stroke-width="1.2"/>
<path d="M16 264q6 2 12-4" fill="none" stroke="#8f8f8f" stroke-width="1.3"/><path d="M26 257l4 1-2 4z" fill="#8f8f8f"/>
<!-- cube purple -->
<path d="M7.3 284.5L11.5 280.2H28.6V297L24.5 301.6H7.3Z" fill="#d0d0f0"/>
<path d="M7.3 284.5L13 285V298L7.3 301.6z" fill="#8e8fbc"/>
<path d="M7.3 284.5L11.5 280.2H28.6L22 285H13z" fill="#d2d2f2"/>
<path d="M22 285L28.6 280.2V297L22 298z" fill="#dedefa"/>
<path d="M7.3 301.6L13 298H22L24.5 301.6z" fill="#7474ac"/>
<rect x="13" y="285" width="9" height="13" fill="#b2b3d6"/>
<path d="M25 298.5h5l-2.5 3z" fill="#000"/>
<!-- move -->
<ellipse cx="18" cy="321" rx="10" ry="9.5" fill="none" stroke="#f5b8b8" stroke-width="0.8"/>
<ellipse cx="18" cy="321" rx="8" ry="10" fill="none" stroke="#b8e8b8" stroke-width="0.8"/>
<ellipse cx="18" cy="321" rx="10" ry="8" fill="none" stroke="#b8c8f5" stroke-width="0.8"/>
<path d="M18 312v18M9 321h18" stroke="#222" stroke-width="1.6"/>
<path d="M15 314.5l3-3.5 3 3.5zM15 327.5l3 3.5 3-3.5zM11.5 318l-3.5 3 3.5 3zM24.5 318l3.5 3-3.5 3z" fill="#222"/>
<path d="M25 328h4l-2 2.5z" fill="#000"/>
<!-- magnifier -->
<circle cx="16" cy="349" r="6.5" fill="#ececec" stroke="#a8a8a8" stroke-width="2.2"/>
<path d="M14 346q2-2 4-1" stroke="#fff" stroke-width="1.5" fill="none"/>
<path d="M21 354.5l6 6" stroke="#9a9a9a" stroke-width="3" stroke-linecap="round"/>
</svg>
<svg style="left:0;top:0" width="1374" height="868" viewBox="0 0 1374 868"><defs><linearGradient id="og" x1="0" y1="0" x2="0" y2="1"><stop offset="0" stop-color="#f7ab6c"/><stop offset="1" stop-color="#ee8434"/></linearGradient><linearGradient id="cubeg" x1="0" y1="0" x2="1" y2="1"><stop offset="0" stop-color="#b8b8e0"/><stop offset="1" stop-color="#8a8ac0"/></linearGradient></defs><path d="M8.5 376.5L13.5 372.5H27.5V385.5L22.5 389.5H8.5z" fill="#fff"/><path d="M8.5 376.5L13.5 372.5H27.5L22.5 376.5z" fill="#f29a55"/><g fill="none" stroke="#474747" stroke-width="1"><rect x="8.5" y="376.5" width="14" height="13"/><rect x="13.5" y="372.5" width="14" height="13"/><path d="M8.5 376.5L13.5 372.5M22.5 376.5L27.5 372.5M8.5 389.5L13.5 385.5M22.5 389.5L27.5 385.5"/></g><path d="M8.5 406.5L13.5 402.5H27.5V415.5L22.5 419.5H8.5z" fill="#fff"/><rect x="8.5" y="406.5" width="14" height="13" fill="url(#og)"/><g fill="none" stroke="#474747" stroke-width="1"><rect x="8.5" y="406.5" width="14" height="13"/><rect x="13.5" y="402.5" width="14" height="13"/><path d="M8.5 406.5L13.5 402.5M22.5 406.5L27.5 402.5M8.5 419.5L13.5 415.5M22.5 419.5L27.5 415.5"/></g><path d="M8.5 436.5L13.5 432.5H27.5V445.5L22.5 449.5H8.5z" fill="#fff"/><path d="M8.5 436.5L13.5 432.5V445.5L8.5 449.5z" fill="#f29a55"/><g fill="none" stroke="#474747" stroke-width="1"><rect x="8.5" y="436.5" width="14" height="13"/><rect x="13.5" y="432.5" width="14" height="13"/><path d="M8.5 436.5L13.5 432.5M22.5 436.5L27.5 432.5M8.5 449.5L13.5 445.5M22.5 449.5L27.5 445.5"/></g><path d="M8.5 466.5L13.5 462.5H27.5V475.5L22.5 479.5H8.5z" fill="#fff"/><rect x="13.5" y="462.5" width="14" height="13" fill="url(#og)"/><g fill="none" stroke="#474747" stroke-width="1"><rect x="8.5" y="466.5" width="14" height="13"/><rect x="13.5" y="462.5" width="14" height="13"/><path d="M8.5 466.5L13.5 462.5M22.5 466.5L27.5 462.5M8.5 479.5L13.5 475.5M22.5 479.5L27.5 475.5"/></g><path d="M8.5 496.5L13.5 492.5H27.5V505.5L22.5 509.5H8.5z" fill="#fff"/><path d="M22.5 496.5L27.5 492.5V505.5L22.5 509.5z" fill="#f29a55"/><g fill="none" stroke="#474747" stroke-width="1"><rect x="8.5" y="496.5" width="14" height="13"/><rect x="13.5" y="492.5" width="14" height="13"/><path d="M8.5 496.5L13.5 492.5M22.5 496.5L27.5 492.5M8.5 509.5L13.5 505.5M22.5 509.5L27.5 505.5"/></g><path d="M8.5 526.5L13.5 522.5H27.5V535.5L22.5 539.5H8.5z" fill="#fff"/><path d="M8.5 539.5L13.5 535.5H27.5L22.5 539.5z" fill="#f29a55"/><g fill="none" stroke="#474747" stroke-width="1"><rect x="8.5" y="526.5" width="14" height="13"/><rect x="13.5" y="522.5" width="14" height="13"/><path d="M8.5 526.5L13.5 522.5M22.5 526.5L27.5 522.5M8.5 539.5L13.5 535.5M22.5 539.5L27.5 535.5"/></g><path d="M18 549l11 5v13l-11 6-11-6v-13z" fill="#f08f45"/><path d="M18 559l11-5v13l-11 6z" fill="#e07a30"/><path d="M18 559l-11-5 11-5 11 5z" fill="#f6a564"/><text x="18" y="557" font-family="Liberation Sans" font-weight="bold" font-size="7" fill="#111" text-anchor="middle" textLength="22" lengthAdjust="spacingAndGlyphs">FRONT</text><path d="M18 579l11 5v13l-11 6-11-6v-13z" fill="#f08f45"/><path d="M18 589l11-5v13l-11 6z" fill="#e07a30"/><path d="M18 589l-11-5 11-5 11 5z" fill="#f6a564"/><text x="18" y="587" font-family="Liberation Sans" font-weight="bold" font-size="7" fill="#111" text-anchor="middle" textLength="18" lengthAdjust="spacingAndGlyphs">BACK</text><rect x="6.5" y="609.5" width="24" height="23" rx="3" fill="#eef0f3" stroke="#c9ced6"/><circle cx="13.5" cy="621" r="3.8" fill="#4a6ed0"/><circle cx="22.3" cy="621" r="3.8" fill="#f0479a"/></svg>
<!-- right toolbar icons -->
<svg style="left:0;top:0" width="1374" height="868" viewBox="0 0 1374 868">
<defs>
<linearGradient id="gg" x1="0" y1="0" x2="1" y2="1"><stop offset="0" stop-color="#d0d0d0"/><stop offset="1" stop-color="#6a6a6a"/></linearGradient>
<radialGradient id="sh" cx="0.4" cy="0.35" r="0.7"><stop offset="0" stop-color="#b0b0b0"/><stop offset="1" stop-color="#5a5a5a"/></radialGradient>
</defs>
<!-- forbid -->
<circle cx="1340.5" cy="110.5" r="10" fill="none" stroke="#6e6e6e" stroke-width="4"/>
<circle cx="1340.5" cy="110.5" r="10" fill="none" stroke="#9a9a9a" stroke-width="2.2"/>
<path d="M1333.5 117.5l14-14" stroke="#6e6e6e" stroke-width="4.2"/><path d="M1333.5 117.5l14-14" stroke="#9a9a9a" stroke-width="2.2"/>
<!-- EDL / SSAO -->
<rect x="1331" y="131" width="21" height="21" fill="#8a8a8a"/>
<path d="M1339 147q-5-4-2-9q3-4 7-2q5-3 7-4q0 8-4 13z" fill="#a9a9a9"/><path d="M1340 146q-2-4 1-7" stroke="#666" stroke-width="1.5" fill="none"/>
<text x="1332" y="151.5" font-family="Liberation Mono" font-weight="bold" font-size="7" fill="#fff" textLength="15" lengthAdjust="spacingAndGlyphs">EDL</text>
<rect x="1331" y="161" width="21" height="21" fill="#8a8a8a"/>
<path d="M1339 177q-5-4-2-9q3-4 7-2q5-3 7-4q0 8-4 13z" fill="#a9a9a9"/><path d="M1340 176q-2-4 1-7" stroke="#666" stroke-width="1.5" fill="none"/>
<text x="1331.5" y="181.5" font-family="Liberation Mono" font-weight="bold" font-size="7" fill="#fff" textLength="19" lengthAdjust="spacingAndGlyphs">SSAO</text>
<!-- clapper -->
<path d="M1330 207l21-4 1 3-21 4z" fill="#8a8a8a"/><path d="M1333 206.5l2-3M1337 205.8l2-3M1341 205l2-3M1345 204.3l2-3" stroke="#e0e0e0" stroke-width="1.2"/>
<rect x="1330" y="209" width="22" height="4" fill="#8a8a8a"/><path d="M1333 213l2-4M1337 213l2-4M1341 213l2-4M1345 213l2-4" stroke="#e0e0e0" stroke-width="1.2"/>
<rect x="1330" y="213" width="22" height="11" fill="url(#gg)"/>
<!-- brush -->
<path d="M1340.5 231v14" stroke="#a0a0a0" stroke-width="2"/>
<path d="M1337 245h7l2 8-11 0z" fill="#c9c9c9" stroke="#aaa" stroke-width="0.8"/>
<!-- compass -->
<rect x="1329.5" y="261.5" width="23" height="23" rx="3" fill="#e8e8e8" stroke="#7a7a7a" stroke-width="1.4"/>
<circle cx="1341" cy="273" r="9.5" fill="#fbfbfb" stroke="#8a8a8a" stroke-width="1.6"/>
<path d="M1337 265v16M1345 265v16M1341 264v2M1341 280v2" stroke="#c0c0c0" stroke-width="0.8"/>
<path d="M1336 279l4-7 2 2zM1346 267l-4 7-2-2z" fill="#4a4a4a"/>
<!-- shield -->
<path d="M1341 293l9 4v7q-2 6-9 9q-7-3-9-9v-7z" fill="#d7d7d7" stroke="#aaa" stroke-width="0.8"/>
<path d="M1341 296l6.5 3v5q-1.5 4.5-6.5 7q-5-2.5-6.5-7v-5z" fill="url(#sh)"/>
<!-- CSF Filter -->
<text x="1317" y="331.5" font-family="Liberation Sans" font-size="11" fill="#777" textLength="46" lengthAdjust="spacingAndGlyphs">CSF Filter</text>
<!-- N -->
<rect x="1335" y="341" width="12" height="22" fill="#fff"/>
<path d="M1335.5 344.5h9" stroke="#333" stroke-width="1"/><path d="M1343 342.5l3 2-3 2z" fill="#333"/>
<text x="1335" y="362" font-family="Liberation Sans" font-size="14" fill="#6a6a6a" textLength="12" lengthAdjust="spacingAndGlyphs">N</text>
<!-- HPR -->
<rect x="1331" y="372" width="21" height="21" fill="#fff"/>
<path d="M1335 378l6-4 8 2 2 7-4 6-8 1-4-5z" fill="#a8a8a8"/><path d="M1337 377l5 5 7-4M1342 382v8" stroke="#cfcfcf" stroke-width="0.8" fill="none"/>
<text x="1333" y="392" font-family="Liberation Sans" font-weight="bold" font-size="7.5" fill="#333" textLength="17" lengthAdjust="spacingAndGlyphs">HPR</text>
<!-- M3C2 -->
<text x="1330" y="407" font-family="Liberation Sans" font-size="8" fill="#a8a8a8" textLength="22" lengthAdjust="spacingAndGlyphs">M3C2</text>
<path d="M1332 415q6-5 18-6q3 2 1 7q-10 6-18 5q-3-2-1-6z" fill="#fff" stroke="#888" stroke-width="0.8"/>
<g fill="#555"><circle cx="1333" cy="412" r="0.8"/><circle cx="1335" cy="416" r="0.8"/><circle cx="1337" cy="420" r="0.8"/><circle cx="1340" cy="414" r="0.8"/><circle cx="1343" cy="411" r="0.8"/><circle cx="1346" cy="415" r="0.8"/><circle cx="1349" cy="410" r="0.8"/><circle cx="1351" cy="418" r="0.8"/><circle cx="1336" cy="423" r="0.8"/><circle cx="1348" cy="421" r="0.8"/></g>
<!-- PCV -->
<rect x="1331" y="432" width="21" height="21" fill="#8c8c8c"/>
<path d="M1333 438q3-5 7-3q2 4-1 8q-4 0-6-5zM1343 436q5-2 8 2l-2 5q-5 0-6-7z" fill="#b5b5b5"/>
<rect x="1331" y="445" width="21" height="8" fill="#777"/>
<text x="1331.5" y="452.3" font-family="Liberation Mono" font-weight="bold" font-size="7.5" fill="#fff" textLength="20" lengthAdjust="spacingAndGlyphs">PCV</text>
<!-- polygon -->
<rect x="1331" y="462" width="21" height="20" fill="#fff"/>
<path d="M1341.5 463l9 6.5-3.5 10.5h-11l-3.5-10.5z" fill="#8f8f8f"/>
<path d="M1341.5 466l6 4.5-2.3 7h-7.4l-2.3-7z" fill="#9c9c9c" stroke="#7a7a7a" stroke-width="0.6"/>
<!-- RSD -->
<rect x="1331" y="492" width="21" height="21" fill="#fff"/>
<circle cx="1343" cy="498.5" r="5" fill="#aaa"/><path d="M1333 506l6-6 8 3 3 3v4h-17z" fill="#999"/>
<text x="1332" y="512" font-family="Liberation Sans" font-size="8.5" fill="#333" textLength="19" lengthAdjust="spacingAndGlyphs">RSD</text>
<!-- ellipse -->
<ellipse cx="1341" cy="531.5" rx="11.5" ry="6" fill="none" stroke="#aaa" stroke-width="1"/>
<g fill="#aaa"><circle cx="1341" cy="525.5" r="1"/><circle cx="1341" cy="537.5" r="1"/></g>
</svg>
<!-- chrome details -->
<svg style="left:0;top:0" width="1374" height="868" viewBox="0 0 1374 868">
<!-- title icon -->
<rect x="9" y="7" width="16" height="16" fill="#c3d3e3"/>
<path d="M9 11h16M9 15h16M9 19h16M13 7v16M17 7v16M21 7v16" stroke="#d3dfeb" stroke-width="1"/>
<path d="M19.11 11.27A5.00 5.00 0 1 0 19.11 18.93" fill="none" stroke="#0d5a94" stroke-width="1.5"/><path d="M23.43 11.89A5.00 5.00 0 1 0 23.43 18.31" fill="none" stroke="#0d5a94" stroke-width="1.5"/>
<!-- window buttons -->
<path d="M1253.5 15.5h10.5" stroke="#fff" stroke-width="1"/>
<rect x="1298.5" y="10.5" width="10" height="10" fill="none" stroke="#fff" stroke-width="1"/>
<path d="M1344.5 10.5l10 10M1354.5 10.5l-10 10" stroke="#fff" stroke-width="1.1"/>
<!-- menu CC icon -->
<path d="M10.62 37.50A4.70 4.70 0 1 0 10.62 44.70" fill="none" stroke="#14609c" stroke-width="1.5"/><path d="M15.00 38.08A4.70 4.70 0 1 0 15.00 44.12" fill="none" stroke="#14609c" stroke-width="1.5"/>
<!-- MDI buttons -->
<rect x="1319.5" y="32.5" width="16" height="17" fill="#fff" stroke="#e3e3e3"/>
<rect x="1337.5" y="32.5" width="16" height="17" fill="#fff" stroke="#e3e3e3"/>
<rect x="1355.5" y="32.5" width="16" height="17" fill="#fff" stroke="#e3e3e3"/>
<path d="M1324 44h6" stroke="#5f6f80" stroke-width="1.6"/>
<path d="M1342.5 40.5h5v4h-5zM1344.5 40.5v-2.5h5v4h-2" fill="none" stroke="#5f6f80" stroke-width="1.2"/>
<path d="M1360.5 37.5l6 6M1366.5 37.5l-6 6" stroke="#5f6f80" stroke-width="2"/>
<!-- tree items -->
<path d="M50 124.5h11.5l-5.75 7z" fill="#5b3b3b"/>
<rect x="69.5" y="122.5" width="12" height="12" fill="#fff" stroke="#cfcfcf"/>
<path d="M71 128.5l2.7 3 5.8-5.8" fill="none" stroke="#9c9c9c" stroke-width="1.2"/>
<path d="M91 121.5L102 125.5L101.5 134.5L90.5 131z" fill="#bcbcbc"/>
<path d="M88.5 125.5L100.5 129Q102 130 101.8 131.5L101.5 135L90 132Q88.8 131.5 88.8 130z" fill="#d0d0d0" stroke="#a8a8a8" stroke-width="0.6"/>
<path d="M75.5 138v9.5h10" fill="none" stroke="#c0b6b0" stroke-width="1"/>
<rect x="89.5" y="142.5" width="12" height="12" fill="#fff" stroke="#cfcfcf"/>
<path d="M91 148.5l2.7 3 5.8-5.8" fill="none" stroke="#9c9c9c" stroke-width="1.2"/>
<path d="M108.5 148Q109 145 112 144.5Q114 142.5 116.5 142.3Q121 142.5 123.5 146Q124.5 149 123 151.5Q120 154 115.5 154Q111 153.8 109 151.5Q108 150 108.5 148z" fill="#ececec" stroke="#7a7a7a" stroke-width="0.9"/>
<path d="M113 147q3-2 6 0" fill="none" stroke="#d0d0d0" stroke-width="0.8"/>
<!-- console scrollbar -->
<rect x="1283" y="743" width="16" height="93" fill="#f0f0f0"/>
<rect x="1283" y="801" width="16" height="18" fill="#cdcdcd"/>
<path d="M1287.5 754.5l3.5-3.5 3.5 3.5M1287.5 825.5l3.5 3.5 3.5-3.5" fill="none" stroke="#606060" stroke-width="1.4"/>
<!-- size grip -->
<g fill="#bdbdbd"><rect x="1370" y="856" width="2" height="2"/><rect x="1367" y="859" width="2" height="2"/><rect x="1370" y="859" width="2" height="2"/><rect x="1364" y="862" width="2" height="2"/><rect x="1367" y="862" width="2" height="2"/><rect x="1370" y="862" width="2" height="2"/></g>
</svg>
<div class="t" style="left:110px;top:122px;color:#6d6d6d;letter-spacing:-0.1px">NodesToMove.xyz (C:/Abaqus)</div>
<div class="t" style="left:130px;top:142px;color:#6d6d6d">NodesToMove - Cloud</div>
<!-- console rows -->
<div class="a" style="left:47px;top:760px;width:1235px;height:17px;background:#f5f5f5"></div>
<div class="a" style="left:47px;top:794px;width:1235px;height:17px;background:#f5f5f5"></div>
<div class="t" style="left:50px;top:745px;letter-spacing:-0.07px">[10:37:39] [I/O] File 'C:/Abaqus/NodesToMove.xyz' loaded successfully</div>
<div class="t" style="left:50px;top:762px;letter-spacing:-0.2px">[10:37:58] [Picked] Point #17162</div>
<div class="t" style="left:50px;top:779px;letter-spacing:-0.2px">[10:37:58] [Picked]</div>
<div class="t" style="left:50px;top:796px;letter-spacing:-0.2px">[10:37:58] [Picked]</div>
<div class="t" style="left:50px;top:813px;letter-spacing:-0.2px">[10:37:58] [Picked]</div>
<div class="t" style="left:211px;top:779px;letter-spacing:-0.52px">- P#17162 (-16.392658;6.896000;9.080260)</div>
<div class="t" style="left:211px;top:796px;letter-spacing:-0.39px">- Normal: (-0.874782;0.001327;0.484515)</div>
<div class="t" style="left:211px;top:813px;letter-spacing:-0.24px">- Node number = 49121.000000</div>
<!-- dock float buttons -->
<svg style="left:0;top:0" width="1374" height="868" viewBox="0 0 1374 868">
<g transform="translate(0 0)"><rect x="395.2" y="92" width="5.8" height="5.7" fill="#4a4a4a"/><rect x="396.2" y="93.7" width="3.8" height="3" fill="#e6e6e6"/><rect x="392.3" y="94.3" width="7.4" height="7.3" fill="#dadada"/><rect x="393.1" y="95.1" width="5.8" height="5.7" fill="#4a4a4a"/><rect x="394.1" y="96.8" width="3.8" height="3" fill="#eeeeee"/></g><g transform="translate(0 225)"><rect x="395.2" y="92" width="5.8" height="5.7" fill="#4a4a4a"/><rect x="396.2" y="93.7" width="3.8" height="3" fill="#e6e6e6"/><rect x="392.3" y="94.3" width="7.4" height="7.3" fill="#dadada"/><rect x="393.1" y="95.1" width="5.8" height="5.7" fill="#4a4a4a"/><rect x="394.1" y="96.8" width="3.8" height="3" fill="#eeeeee"/></g><g transform="translate(888.2 624.2)"><rect x="395.2" y="92" width="5.8" height="5.7" fill="#4a4a4a"/><rect x="396.2" y="93.7" width="3.8" height="3" fill="#e6e6e6"/><rect x="392.3" y="94.3" width="7.4" height="7.3" fill="#dadada"/><rect x="393.1" y="95.1" width="5.8" height="5.7" fill="#4a4a4a"/><rect x="394.1" y="96.8" width="3.8" height="3" fill="#eeeeee"/></g>
<path d="M1297 716.5l7.5 7.5M1304.5 716.5l-7.5 7.5" stroke="#111" stroke-width="1.3"/>
</svg>
</body></html>
